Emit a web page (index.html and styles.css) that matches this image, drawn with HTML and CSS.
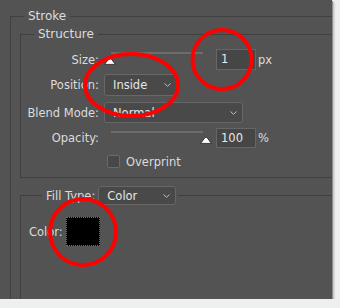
FILE: index.html
```html
<!DOCTYPE html>
<html lang="en">
<head>
<meta charset="UTF-8">
<title>Stroke</title>
<link rel="stylesheet" href="styles.css">
</head>
<body>

<div class="panel">
  <fieldset class="group group-stroke">
    <legend class="group-title">Stroke</legend>

    <fieldset class="group group-structure">
      <legend class="group-title">Structure</legend>

      <div class="row row-size">
        <span class="row-label">Size:</span>
        <div class="slider">
          <div class="slider-track"></div>
          <svg class="slider-handle" style="left: 0px" width="12" height="8" viewBox="0 0 12 8"><path d="M0.6 7.4 L4.7 1.9 Q6 0.4 7.3 1.9 L11.4 7.4 Z" fill="#fff" stroke="#1e1e1e" stroke-width="0.8"/></svg>
        </div>
        <div class="num-input">1</div>
        <span class="unit">px</span>
      </div>

      <div class="row row-position">
        <span class="row-label">Position:</span>
        <div class="dropdown dropdown-position">
          <span>Inside</span>
          <svg class="chevron" width="7" height="4" viewBox="0 0 7 4"><path d="M0.5 0.5 L3.5 3.3 L6.5 0.5" fill="none" stroke="#bdbdbd" stroke-width="1"/></svg>
        </div>
      </div>

      <div class="row row-blend">
        <span class="row-label">Blend Mode:</span>
        <div class="dropdown dropdown-blend">
          <span>Normal</span>
          <svg class="chevron" width="7" height="4" viewBox="0 0 7 4"><path d="M0.5 0.5 L3.5 3.3 L6.5 0.5" fill="none" stroke="#bdbdbd" stroke-width="1"/></svg>
        </div>
      </div>

      <div class="row row-opacity">
        <span class="row-label">Opacity:</span>
        <div class="slider">
          <div class="slider-track"></div>
          <svg class="slider-handle" style="left: 96px" width="12" height="8" viewBox="0 0 12 8"><path d="M0.6 7.4 L4.7 1.9 Q6 0.4 7.3 1.9 L11.4 7.4 Z" fill="#fff" stroke="#1e1e1e" stroke-width="0.8"/></svg>
        </div>
        <div class="num-input">100</div>
        <span class="unit">%</span>
      </div>

      <div class="row row-overprint">
        <span class="row-label"></span>
        <span class="checkbox"></span>
        <span class="check-label">Overprint</span>
      </div>
    </fieldset>

    <fieldset class="group group-fill">
      <legend class="group-title fill-legend">
        <span>Fill Type:</span>
        <span class="dropdown dropdown-fill">
          <span>Color</span>
          <svg class="chevron" width="7" height="4" viewBox="0 0 7 4"><path d="M0.5 0.5 L3.5 3.3 L6.5 0.5" fill="none" stroke="#bdbdbd" stroke-width="1"/></svg>
        </span>
      </legend>

      <div class="color-row">
        <span>Color:</span>
        <span class="swatch"></span>
      </div>
    </fieldset>
  </fieldset>

  <!-- red marks drawn over the dialog -->
  <svg class="marks" width="340" height="308" viewBox="0 0 340 308">
    <ellipse cx="222" cy="59.5" rx="29.5" ry="29.5" fill="none" stroke="#f00" stroke-width="4"/>
    <ellipse cx="131.5" cy="85" rx="46.5" ry="31" fill="none" stroke="#f00" stroke-width="4"/>
    <ellipse cx="83" cy="232" rx="33" ry="33" fill="none" stroke="#f00" stroke-width="4"/>
  </svg>
</div>

</body>
</html>
```

FILE: styles.css
```css
body {
  margin: 0;
  padding: 0;
  background-color: #eef0f0;
  font-family: 'DejaVu Sans', sans-serif;
  font-size: 11.5px;
  color: #dcdcdc;
}

.panel {
  position: relative;
  width: 332px;
  height: 299px;
  overflow: hidden;
  background-color: #535353;
  box-shadow: 1px 1px 0 #8e8e8e, 2px 2px 2px #b4b4b4;
}

.group {
  margin: 0;
  padding: 0;
  min-width: 0;
  border: 1px solid #404040;
}

.group-title {
  margin-left: 13px;
  padding: 0 4px;
  line-height: 14px;
}

.group-stroke {
  margin: 9px -30px 0 10px;
  padding-bottom: 60px;
  font-size: 12px;
}

.group-structure {
  margin: 4px 0 0 9px;
  padding: 8px 0 9px 0;
}

.row {
  display: flex;
  align-items: center;
  font-size: 11.5px;
}

.row-label {
  width: 78px;
  margin-right: 5px;
  text-align: right;
}

.row-size {
  height: 21px;
}

.row-position {
  height: 22px;
  margin-top: 4px;
}

.row-blend {
  height: 21px;
  margin-top: 6px;
}

.row-opacity {
  height: 20px;
  margin-top: 5px;
}

.row-overprint {
  height: 13px;
  margin-top: 7px;
}

.slider {
  position: relative;
  width: 108px;
  height: 100%;
  margin-right: 4px;
}

.slider-track {
  position: absolute;
  top: 3px;
  left: 7px;
  width: 92px;
  height: 2px;
  background-color: #6c6c6c;
}

.slider-handle {
  position: absolute;
  top: 8px;
}

.num-input {
  box-sizing: border-box;
  width: 40px;
  height: 21px;
  padding-left: 4px;
  line-height: 19px;
  border: 1px solid #666;
  background-color: #464646;
  color: #e8e8e8;
}

.row-opacity .num-input {
  height: 20px;
  line-height: 18px;
}

.unit {
  margin-left: 2px;
}

.dropdown {
  box-sizing: border-box;
  display: flex;
  align-items: center;
  justify-content: space-between;
  height: 100%;
  padding: 0 5px 0 8px;
  border: 1px solid #676767;
  border-radius: 3px;
  background-color: #494949;
  color: #e6e6e6;
}

.dropdown-position {
  width: 73px;
}

.dropdown-blend {
  width: 139px;
}

.checkbox {
  box-sizing: border-box;
  width: 13px;
  height: 13px;
  margin-left: 3px;
  border: 1px solid #6a6a6a;
  border-radius: 2px;
  background-color: #474747;
}

.check-label {
  margin-left: 6px;
}

.group-fill {
  margin: 8px 0 0 9px;
  padding: 12px 0 60px 8px;
}

.fill-legend {
  display: flex;
  align-items: center;
  padding: 0 2px 0 4px;
  font-size: 11.5px;
}

.dropdown-fill {
  width: 78px;
  height: 19px;
  margin-left: 3px;
}

.color-row {
  display: flex;
  align-items: center;
  font-size: 11.5px;
}

.swatch {
  box-sizing: border-box;
  width: 34px;
  height: 29px;
  margin-left: 3px;
  border: 1px dotted #6e6e6e;
  background-color: #000;
}

.marks {
  position: absolute;
  top: 0;
  left: 0;
  pointer-events: none;
}
```
